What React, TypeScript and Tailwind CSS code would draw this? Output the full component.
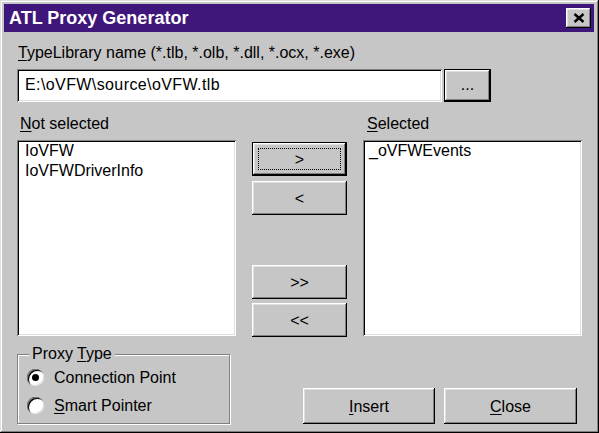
import React from "react";

const raised =
  "bg-[#c6c6c6] shadow-[inset_-1px_-1px_#000,inset_1px_1px_#fff,inset_-2px_-2px_#808080,inset_2px_2px_#dfdfdf]";
const raisedDefault =
  "bg-[#c6c6c6] border border-black shadow-[inset_-1px_-1px_#000,inset_1px_1px_#fff,inset_-2px_-2px_#808080,inset_2px_2px_#dfdfdf]";
const sunken =
  "bg-white shadow-[inset_1px_1px_#808080,inset_-1px_-1px_#fff,inset_2px_2px_#000,inset_-2px_-2px_#dfdfdf]";

function Radio({ checked }: { checked?: boolean }) {
  return (
    <span className="w-[17px] h-[17px] rounded-full bg-white shadow-[inset_1px_1px_0_#808080,inset_2px_2px_0_#000,inset_-1px_-1px_0_#dfdfdf] flex items-center justify-center shrink-0">
      {checked && <span className="w-[7px] h-[7px] rounded-full bg-black" />}
    </span>
  );
}

export default function App() {
  return (
    <div className="w-[599px] h-[433px] bg-[#c6c6c6] p-[4px] pr-[5px] font-['Liberation_Sans',Arial,sans-serif] text-[16px] leading-[17px] text-black shadow-[inset_-1px_-1px_#000,inset_1px_1px_#dfdfdf,inset_-2px_-2px_#808080,inset_2px_2px_#fff]">
      {/* Title bar */}
      <div className="h-[28px] bg-[#3f1679] flex items-center pl-[5px] pr-[3px]">
        <span className="text-white font-bold text-[18px] leading-[20px]">ATL Proxy Generator</span>
        <button className={`ml-auto w-[25px] h-[20px] flex items-center justify-center ${raised}`}>
          <svg width="12" height="10" viewBox="0 0 12 10">
            <path d="M1.5 1 L10.5 9 M10.5 1 L1.5 9" stroke="#000" strokeWidth="2.4" fill="none" />
          </svg>
        </button>
      </div>

      {/* Body */}
      <div className="pl-[13px] pr-[12px] pt-[12px]">
        <div className="pl-[1px] h-[17px]">
          <u className="underline-offset-2">T</u>ypeLibrary name (*.tlb, *.olb, *.dll, *.ocx, *.exe)
        </div>
        <div className="flex mt-[8px] gap-[2px]">
          <div className={`w-[425px] h-[33px] flex items-center pl-[8px] pb-[2px] tracking-[0.4px] ${sunken}`}>
            {"E:\\oVFW\\source\\oVFW.tlb"}
          </div>
          <button className={`w-[47px] h-[33px] flex items-center justify-center pb-[2px] ${raisedDefault}`}>
            ...
          </button>
        </div>

        <div className="flex mt-[13px]">
          <div className="w-[219px]">
            <div className="pl-[3px] h-[17px]">
              <u className="underline-offset-2">N</u>ot selected
            </div>
            <div className={`mt-[8px] h-[196px] pl-[8px] pt-[1px] leading-[20px] ${sunken}`}>
              <div>IoVFW</div>
              <div>IoVFWDriverInfo</div>
            </div>
          </div>

          <div className="ml-[16px] pt-[27px] flex flex-col w-[95px]">
            <button className={`h-[34px] flex p-[5px] ${raisedDefault}`}>
              <span className="flex-1 self-stretch flex items-center justify-center border border-dotted border-black">
                &gt;
              </span>
            </button>
            <button className={`h-[34px] mt-[5px] flex items-center justify-center ${raised}`}>&lt;</button>
            <button className={`h-[34px] mt-[50px] flex items-center justify-center ${raised}`}>&gt;&gt;</button>
            <button className={`h-[34px] mt-[4px] flex items-center justify-center ${raised}`}>&lt;&lt;</button>
          </div>

          <div className="ml-[16px] w-[219px]">
            <div className="pl-[4px] h-[17px]">
              <u className="underline-offset-2">S</u>elected
            </div>
            <div className={`mt-[8px] h-[196px] pl-[6px] pt-[1px] leading-[20px] ${sunken}`}>
              <div>_oVFWEvents</div>
            </div>
          </div>
        </div>

        <div className="flex items-end mt-[17px]">
          <div className="relative w-[213px] h-[70px] border border-[#808080] shadow-[inset_1px_1px_#fff,1px_1px_#fff]">
            <span className="absolute -top-[10px] left-[11px] px-[3px] bg-[#c6c6c6]">
              Proxy <u className="underline-offset-2">T</u>ype
            </span>
            <div className="pt-[8px] pl-[9px] flex flex-col">
              <div className="h-[28px] flex items-center gap-[10px]">
                <Radio checked />
                <span>Connection Point</span>
              </div>
              <div className="h-[28px] flex items-center gap-[10px]">
                <Radio />
                <span>
                  <u className="underline-offset-2">S</u>mart Pointer
                </span>
              </div>
            </div>
          </div>
          <button className={`ml-[73px] w-[132px] h-[36px] flex items-center justify-center ${raised}`}>
            <span>
              <u className="underline-offset-2">I</u>nsert
            </span>
          </button>
          <button className={`ml-[9px] w-[133px] h-[36px] flex items-center justify-center ${raised}`}>
            <span>
              <u className="underline-offset-2">C</u>lose
            </span>
          </button>
        </div>
      </div>
    </div>
  );
}
